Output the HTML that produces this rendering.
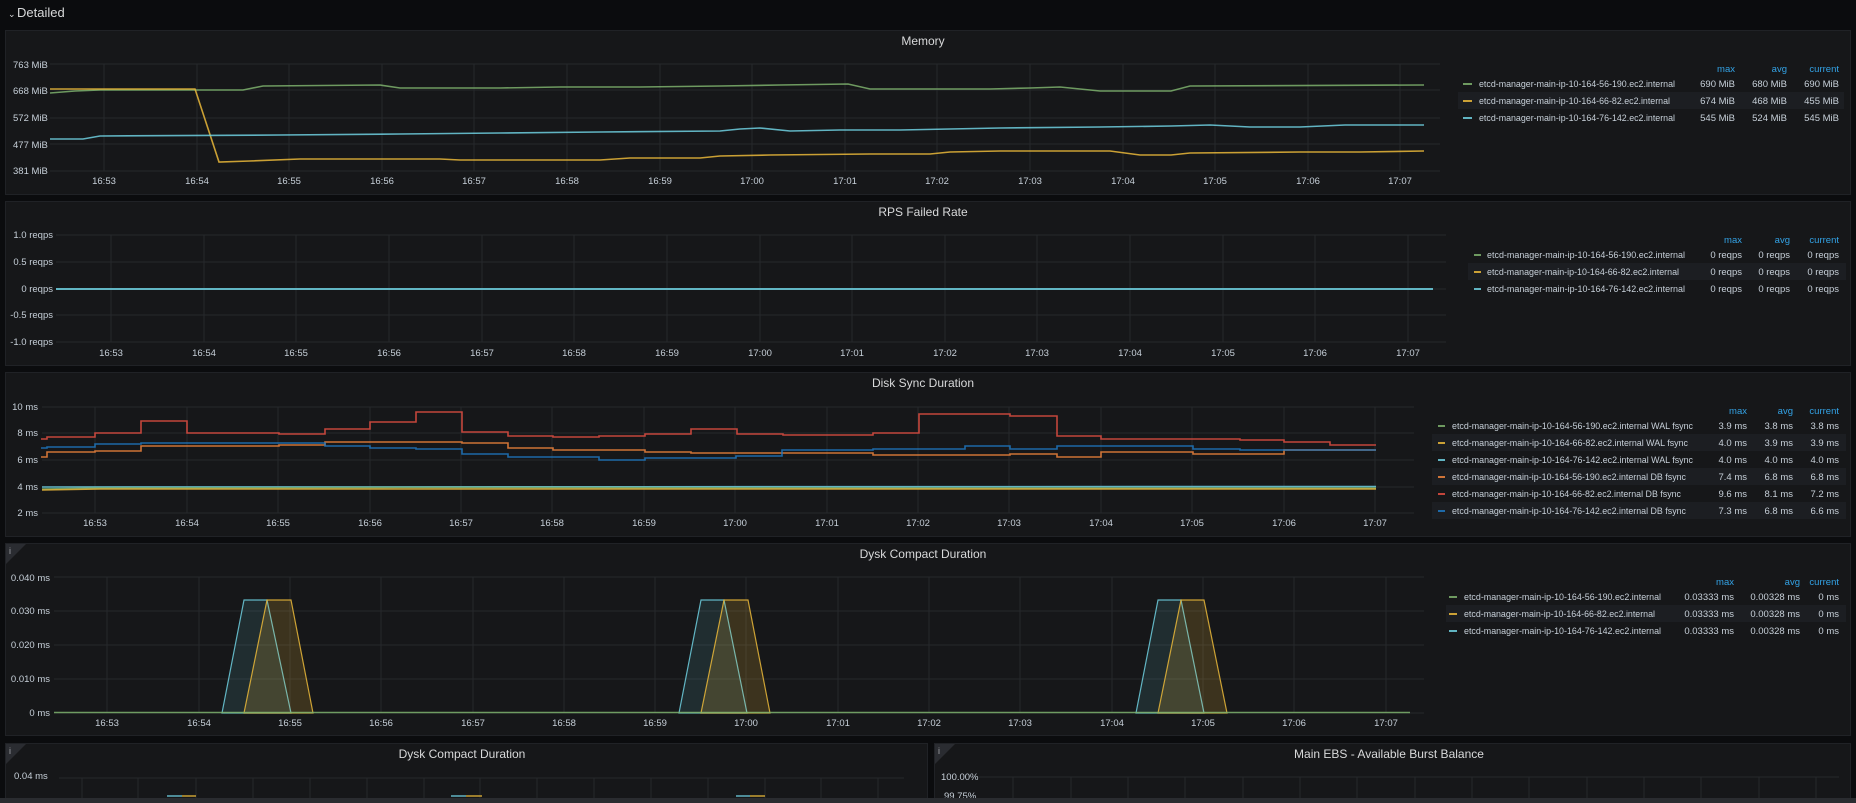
<!DOCTYPE html>
<html><head><meta charset="utf-8"><style>
html,body{margin:0;padding:0;background:#0b0c0e;width:1856px;height:803px;overflow:hidden}
svg{display:block}
text{font-family:"Liberation Sans",sans-serif}
.t{fill:#d8d9da;font-size:12px;text-anchor:middle}
.ax{fill:#c7d0d9;font-size:9.5px}
.r{text-anchor:end}
.m{text-anchor:middle}
.lg{fill:#c7d0d9;font-size:9.5px}
.hd{fill:#33a2e5;font-size:9.5px;text-anchor:end}
.g{stroke:#26282c;stroke-width:1}
.s{stroke-opacity:0.85}
</style></head><body>
<svg width="1856" height="803" viewBox="0 0 1856 803" xmlns="http://www.w3.org/2000/svg">
<rect width="1856" height="803" fill="#0b0c0e"/>
<text x="8" y="17" fill="#d8d9da" font-size="9">⌄</text>
<text x="17" y="17" fill="#d8d9da" font-size="13">Detailed</text>

<!-- panels -->
<g fill="#161719" stroke="#202226">
<rect x="5.5" y="30.5" width="1845" height="164"/>
<rect x="5.5" y="201.5" width="1845" height="164"/>
<rect x="5.5" y="372.5" width="1845" height="164"/>
<rect x="5.5" y="543.5" width="1845" height="192"/>
<rect x="5.5" y="743.5" width="922" height="70"/>
<rect x="934.5" y="743.5" width="916" height="70"/>
</g>

<!-- MEMORY -->
<text class="t" x="923" y="45">Memory</text>
<g class="g">
<line x1="50" y1="64" x2="1440" y2="64"/><line x1="50" y1="90" x2="1440" y2="90"/><line x1="50" y1="118" x2="1440" y2="118"/><line x1="50" y1="144" x2="1440" y2="144"/><line x1="50" y1="171" x2="1440" y2="171"/>
<line x1="104" y1="64" x2="104" y2="171"/><line x1="197" y1="64" x2="197" y2="171"/><line x1="289" y1="64" x2="289" y2="171"/><line x1="382" y1="64" x2="382" y2="171"/><line x1="474" y1="64" x2="474" y2="171"/><line x1="567" y1="64" x2="567" y2="171"/><line x1="660" y1="64" x2="660" y2="171"/><line x1="752" y1="64" x2="752" y2="171"/><line x1="845" y1="64" x2="845" y2="171"/><line x1="937" y1="64" x2="937" y2="171"/><line x1="1030" y1="64" x2="1030" y2="171"/><line x1="1123" y1="64" x2="1123" y2="171"/><line x1="1215" y1="64" x2="1215" y2="171"/><line x1="1308" y1="64" x2="1308" y2="171"/><line x1="1400" y1="64" x2="1400" y2="171"/>
</g>
<g class="ax">
<text x="13" y="68">763 MiB</text><text x="13" y="94">668 MiB</text><text x="13" y="121">572 MiB</text><text x="13" y="148">477 MiB</text><text x="13" y="174">381 MiB</text>
</g>
<g class="ax m">
<text x="104" y="184">16:53</text><text x="197" y="184">16:54</text><text x="289" y="184">16:55</text><text x="382" y="184">16:56</text><text x="474" y="184">16:57</text><text x="567" y="184">16:58</text><text x="660" y="184">16:59</text><text x="752" y="184">17:00</text><text x="845" y="184">17:01</text><text x="937" y="184">17:02</text><text x="1030" y="184">17:03</text><text x="1123" y="184">17:04</text><text x="1215" y="184">17:05</text><text x="1308" y="184">17:06</text><text x="1400" y="184">17:07</text>
</g>
<g fill="none" stroke-width="1.6" class="s">
<polyline stroke="#7eb26d" points="50,93 75,91 100,90 190,90 243,90 263,86 380,85 400,88 500,88 560,87 640,87 720,86 780,85 848,84 870,89 990,89 1030,88 1060,87 1100,91 1171,91 1190,86 1424,85"/>
<polyline stroke="#eab839" points="50,89 195,89 219,162 250,161 300,159 440,159 460,160 600,160 630,158 700,158 720,156 770,155 870,154 930,154 950,152 1000,151 1110,151 1140,155 1171,155 1190,153 1300,152 1360,152 1424,151"/>
<polyline stroke="#6ed0e0" points="50,139 83,139 100,136 280,135 400,134 500,133 600,132 720,131 740,129 760,128 790,131 840,130 900,130 950,129 1000,128 1100,127 1171,126 1210,125 1250,127 1300,127 1345,125 1424,125"/>
</g>
<rect x="1458" y="92" width="386" height="17" fill="#1c1e22"/>
<text class="hd" x="1735" y="72">max</text><text class="hd" x="1787" y="72">avg</text><text class="hd" x="1839" y="72">current</text>
<g stroke-width="2" class="s"><line x1="1463" y1="84" x2="1472" y2="84" stroke="#7eb26d"/><line x1="1463" y1="101" x2="1472" y2="101" stroke="#eab839"/><line x1="1463" y1="118" x2="1472" y2="118" stroke="#6ed0e0"/></g>
<g class="lg">
<text x="1479" y="87" textLength="196" lengthAdjust="spacingAndGlyphs">etcd-manager-main-ip-10-164-56-190.ec2.internal</text>
<text x="1479" y="104" textLength="191" lengthAdjust="spacingAndGlyphs">etcd-manager-main-ip-10-164-66-82.ec2.internal</text>
<text x="1479" y="121" textLength="196" lengthAdjust="spacingAndGlyphs">etcd-manager-main-ip-10-164-76-142.ec2.internal</text>
</g>
<g class="lg r">
<text x="1735" y="87">690 MiB</text><text x="1787" y="87">680 MiB</text><text x="1839" y="87">690 MiB</text>
<text x="1735" y="104">674 MiB</text><text x="1787" y="104">468 MiB</text><text x="1839" y="104">455 MiB</text>
<text x="1735" y="121">545 MiB</text><text x="1787" y="121">524 MiB</text><text x="1839" y="121">545 MiB</text>
</g>

<!-- RPS -->
<text class="t" x="923" y="216">RPS Failed Rate</text>
<g class="g">
<line x1="56" y1="235" x2="1446" y2="235"/><line x1="56" y1="262" x2="1446" y2="262"/><line x1="56" y1="289" x2="1446" y2="289"/><line x1="56" y1="315" x2="1446" y2="315"/><line x1="56" y1="342" x2="1446" y2="342"/>
<line x1="111" y1="235" x2="111" y2="342"/><line x1="204" y1="235" x2="204" y2="342"/><line x1="296" y1="235" x2="296" y2="342"/><line x1="389" y1="235" x2="389" y2="342"/><line x1="482" y1="235" x2="482" y2="342"/><line x1="574" y1="235" x2="574" y2="342"/><line x1="667" y1="235" x2="667" y2="342"/><line x1="760" y1="235" x2="760" y2="342"/><line x1="852" y1="235" x2="852" y2="342"/><line x1="945" y1="235" x2="945" y2="342"/><line x1="1037" y1="235" x2="1037" y2="342"/><line x1="1130" y1="235" x2="1130" y2="342"/><line x1="1223" y1="235" x2="1223" y2="342"/><line x1="1315" y1="235" x2="1315" y2="342"/><line x1="1408" y1="235" x2="1408" y2="342"/>
</g>
<g class="ax r">
<text x="53" y="238">1.0 reqps</text><text x="53" y="265">0.5 reqps</text><text x="53" y="292">0 reqps</text><text x="53" y="318">-0.5 reqps</text><text x="53" y="345">-1.0 reqps</text>
</g>
<g class="ax m">
<text x="111" y="356">16:53</text><text x="204" y="356">16:54</text><text x="296" y="356">16:55</text><text x="389" y="356">16:56</text><text x="482" y="356">16:57</text><text x="574" y="356">16:58</text><text x="667" y="356">16:59</text><text x="760" y="356">17:00</text><text x="852" y="356">17:01</text><text x="945" y="356">17:02</text><text x="1037" y="356">17:03</text><text x="1130" y="356">17:04</text><text x="1223" y="356">17:05</text><text x="1315" y="356">17:06</text><text x="1408" y="356">17:07</text>
</g>
<line x1="56" y1="289" x2="1433" y2="289" stroke="#6ed0e0" stroke-width="2" class="s"/>
<rect x="1468" y="263" width="378" height="17" fill="#1c1e22"/>
<text class="hd" x="1742" y="243">max</text><text class="hd" x="1790" y="243">avg</text><text class="hd" x="1839" y="243">current</text>
<g stroke-width="2" class="s"><line x1="1474" y1="255" x2="1481" y2="255" stroke="#7eb26d"/><line x1="1474" y1="272" x2="1481" y2="272" stroke="#eab839"/><line x1="1474" y1="289" x2="1481" y2="289" stroke="#6ed0e0"/></g>
<g class="lg">
<text x="1487" y="258" textLength="198" lengthAdjust="spacingAndGlyphs">etcd-manager-main-ip-10-164-56-190.ec2.internal</text>
<text x="1487" y="275" textLength="192" lengthAdjust="spacingAndGlyphs">etcd-manager-main-ip-10-164-66-82.ec2.internal</text>
<text x="1487" y="292" textLength="198" lengthAdjust="spacingAndGlyphs">etcd-manager-main-ip-10-164-76-142.ec2.internal</text>
</g>
<g class="lg r">
<text x="1742" y="258">0 reqps</text><text x="1790" y="258">0 reqps</text><text x="1839" y="258">0 reqps</text>
<text x="1742" y="275">0 reqps</text><text x="1790" y="275">0 reqps</text><text x="1839" y="275">0 reqps</text>
<text x="1742" y="292">0 reqps</text><text x="1790" y="292">0 reqps</text><text x="1839" y="292">0 reqps</text>
</g>

<!-- DISK SYNC -->
<text class="t" x="923" y="387">Disk Sync Duration</text>
<g class="g">
<line x1="42" y1="407" x2="1414" y2="407"/><line x1="42" y1="433" x2="1414" y2="433"/><line x1="42" y1="460" x2="1414" y2="460"/><line x1="42" y1="487" x2="1414" y2="487"/><line x1="42" y1="513" x2="1414" y2="513"/>
<line x1="95" y1="407" x2="95" y2="513"/><line x1="187" y1="407" x2="187" y2="513"/><line x1="278" y1="407" x2="278" y2="513"/><line x1="370" y1="407" x2="370" y2="513"/><line x1="461" y1="407" x2="461" y2="513"/><line x1="552" y1="407" x2="552" y2="513"/><line x1="644" y1="407" x2="644" y2="513"/><line x1="735" y1="407" x2="735" y2="513"/><line x1="827" y1="407" x2="827" y2="513"/><line x1="918" y1="407" x2="918" y2="513"/><line x1="1009" y1="407" x2="1009" y2="513"/><line x1="1101" y1="407" x2="1101" y2="513"/><line x1="1192" y1="407" x2="1192" y2="513"/><line x1="1284" y1="407" x2="1284" y2="513"/><line x1="1375" y1="407" x2="1375" y2="513"/>
</g>
<g class="ax r">
<text x="38" y="410">10 ms</text><text x="38" y="436">8 ms</text><text x="38" y="463">6 ms</text><text x="38" y="490">4 ms</text><text x="38" y="516">2 ms</text>
</g>
<g class="ax m">
<text x="95" y="526">16:53</text><text x="187" y="526">16:54</text><text x="278" y="526">16:55</text><text x="370" y="526">16:56</text><text x="461" y="526">16:57</text><text x="552" y="526">16:58</text><text x="644" y="526">16:59</text><text x="735" y="526">17:00</text><text x="827" y="526">17:01</text><text x="918" y="526">17:02</text><text x="1009" y="526">17:03</text><text x="1101" y="526">17:04</text><text x="1192" y="526">17:05</text><text x="1284" y="526">17:06</text><text x="1375" y="526">17:07</text>
</g>
<g fill="none" stroke-width="1.6" class="s">
<line x1="42" y1="487" x2="1376" y2="486.5" stroke="#6ed0e0"/>
<polyline stroke="#7eb26d" points="42,489 100,488 400,487.5 900,488 1376,488"/>
<polyline stroke="#eab839" points="42,490 100,489 400,489 900,489 1376,489"/>
<path stroke="#ef843c" d="M41,457 L47,457 L47,452 L95,452 L95,451 L141,451 L141,446 L279,446 L279,445 L325,445 L325,442 L462,442 L462,443 L508,443 L508,448 L553,448 L553,450 L645,450 L645,452 L691,452 L691,453 L873,453 L873,455 L1010,455 L1010,454 L1057,454 L1057,457 L1101,457 L1101,452 L1193,452 L1193,454 L1284,454 L1284,450 L1376,450"/>
<path stroke="#1f78c1" d="M41,448 L47,448 L47,447 L95,447 L95,444 L141,444 L141,443 L325,443 L325,446 L370,446 L370,448 L416,448 L416,449 L462,449 L462,454 L508,454 L508,457 L599,457 L599,460 L645,460 L645,458 L736,458 L736,456 L782,456 L782,450 L873,450 L873,449 L965,449 L965,446 L1010,446 L1010,449 L1057,449 L1057,446 L1193,446 L1193,449 L1240,449 L1240,450 L1376,450"/>
<path stroke="#e24d42" d="M41,439 L47,439 L47,437 L95,437 L95,433 L141,433 L141,421 L187,421 L187,433 L279,433 L279,434 L325,434 L325,429 L370,429 L370,422 L416,422 L416,412 L462,412 L462,432 L508,432 L508,436 L553,436 L553,437 L599,437 L599,436 L645,436 L645,434 L691,434 L691,429 L737,429 L737,434 L783,434 L783,435 L873,435 L873,433 L919,433 L919,414 L1010,414 L1010,416 L1057,416 L1057,436 L1101,436 L1101,439 L1240,439 L1240,440 L1284,440 L1284,442 L1330,442 L1330,445 L1376,445"/>
</g>
<g fill="#1c1e22"><rect x="1432" y="434" width="414" height="17"/><rect x="1432" y="468" width="414" height="17"/><rect x="1432" y="502" width="414" height="17"/></g>
<text class="hd" x="1747" y="414">max</text><text class="hd" x="1793" y="414">avg</text><text class="hd" x="1839" y="414">current</text>
<g stroke-width="2" class="s">
<line x1="1438" y1="426" x2="1445" y2="426" stroke="#7eb26d"/><line x1="1438" y1="443" x2="1445" y2="443" stroke="#eab839"/><line x1="1438" y1="460" x2="1445" y2="460" stroke="#6ed0e0"/><line x1="1438" y1="477" x2="1445" y2="477" stroke="#ef843c"/><line x1="1438" y1="494" x2="1445" y2="494" stroke="#e24d42"/><line x1="1438" y1="511" x2="1445" y2="511" stroke="#1f78c1"/>
</g>
<g class="lg">
<text x="1452" y="429" textLength="241" lengthAdjust="spacingAndGlyphs">etcd-manager-main-ip-10-164-56-190.ec2.internal WAL fsync</text>
<text x="1452" y="446" textLength="236" lengthAdjust="spacingAndGlyphs">etcd-manager-main-ip-10-164-66-82.ec2.internal WAL fsync</text>
<text x="1452" y="463" textLength="241" lengthAdjust="spacingAndGlyphs">etcd-manager-main-ip-10-164-76-142.ec2.internal WAL fsync</text>
<text x="1452" y="480" textLength="234" lengthAdjust="spacingAndGlyphs">etcd-manager-main-ip-10-164-56-190.ec2.internal DB fsync</text>
<text x="1452" y="497" textLength="229" lengthAdjust="spacingAndGlyphs">etcd-manager-main-ip-10-164-66-82.ec2.internal DB fsync</text>
<text x="1452" y="514" textLength="234" lengthAdjust="spacingAndGlyphs">etcd-manager-main-ip-10-164-76-142.ec2.internal DB fsync</text>
</g>
<g class="lg r">
<text x="1747" y="429">3.9 ms</text><text x="1793" y="429">3.8 ms</text><text x="1839" y="429">3.8 ms</text>
<text x="1747" y="446">4.0 ms</text><text x="1793" y="446">3.9 ms</text><text x="1839" y="446">3.9 ms</text>
<text x="1747" y="463">4.0 ms</text><text x="1793" y="463">4.0 ms</text><text x="1839" y="463">4.0 ms</text>
<text x="1747" y="480">7.4 ms</text><text x="1793" y="480">6.8 ms</text><text x="1839" y="480">6.8 ms</text>
<text x="1747" y="497">9.6 ms</text><text x="1793" y="497">8.1 ms</text><text x="1839" y="497">7.2 ms</text>
<text x="1747" y="514">7.3 ms</text><text x="1793" y="514">6.8 ms</text><text x="1839" y="514">6.6 ms</text>
</g>

<!-- DYSK COMPACT -->
<polygon points="6,544 26,544 6,564" fill="#2a2c31"/><text x="9" y="554" fill="#9fa1a6" font-size="9">i</text>
<text class="t" x="923" y="558">Dysk Compact Duration</text>
<g class="g">
<line x1="54" y1="577" x2="1424" y2="577"/><line x1="54" y1="611" x2="1424" y2="611"/><line x1="54" y1="645" x2="1424" y2="645"/><line x1="54" y1="679" x2="1424" y2="679"/><line x1="54" y1="713" x2="1424" y2="713"/>
<line x1="107" y1="577" x2="107" y2="713"/><line x1="199" y1="577" x2="199" y2="713"/><line x1="290" y1="577" x2="290" y2="713"/><line x1="381" y1="577" x2="381" y2="713"/><line x1="473" y1="577" x2="473" y2="713"/><line x1="564" y1="577" x2="564" y2="713"/><line x1="655" y1="577" x2="655" y2="713"/><line x1="746" y1="577" x2="746" y2="713"/><line x1="838" y1="577" x2="838" y2="713"/><line x1="929" y1="577" x2="929" y2="713"/><line x1="1020" y1="577" x2="1020" y2="713"/><line x1="1112" y1="577" x2="1112" y2="713"/><line x1="1203" y1="577" x2="1203" y2="713"/><line x1="1294" y1="577" x2="1294" y2="713"/><line x1="1386" y1="577" x2="1386" y2="713"/>
</g>
<g class="ax r">
<text x="50" y="581">0.040 ms</text><text x="50" y="614">0.030 ms</text><text x="50" y="648">0.020 ms</text><text x="50" y="682">0.010 ms</text><text x="50" y="716">0 ms</text>
</g>
<g class="ax m">
<text x="107" y="726">16:53</text><text x="199" y="726">16:54</text><text x="290" y="726">16:55</text><text x="381" y="726">16:56</text><text x="473" y="726">16:57</text><text x="564" y="726">16:58</text><text x="655" y="726">16:59</text><text x="746" y="726">17:00</text><text x="838" y="726">17:01</text><text x="929" y="726">17:02</text><text x="1020" y="726">17:03</text><text x="1112" y="726">17:04</text><text x="1203" y="726">17:05</text><text x="1294" y="726">17:06</text><text x="1386" y="726">17:07</text>
</g>
<g stroke-width="1.2" class="s">
<polygon points="222,713 244,600 267,600 291,713" fill="#6ed0e0" fill-opacity="0.12" stroke="#6ed0e0"/>
<polygon points="679,713 701,600 724,600 747,713" fill="#6ed0e0" fill-opacity="0.12" stroke="#6ed0e0"/>
<polygon points="1136,713 1158,600 1181,600 1204,713" fill="#6ed0e0" fill-opacity="0.12" stroke="#6ed0e0"/>
<polygon points="244,713 267,600 291,600 313,713" fill="#eab839" fill-opacity="0.18" stroke="#eab839"/>
<polygon points="701,713 724,600 748,600 770,713" fill="#eab839" fill-opacity="0.18" stroke="#eab839"/>
<polygon points="1158,713 1181,600 1204,600 1227,713" fill="#eab839" fill-opacity="0.18" stroke="#eab839"/>
<line x1="54" y1="712.5" x2="1410" y2="712.5" stroke="#7eb26d" stroke-width="1.6"/>
</g>
<rect x="1446" y="605" width="400" height="17" fill="#1c1e22"/>
<text class="hd" x="1734" y="585">max</text><text class="hd" x="1800" y="585">avg</text><text class="hd" x="1839" y="585">current</text>
<g stroke-width="2" class="s"><line x1="1449" y1="597" x2="1457" y2="597" stroke="#7eb26d"/><line x1="1449" y1="614" x2="1457" y2="614" stroke="#eab839"/><line x1="1449" y1="631" x2="1457" y2="631" stroke="#6ed0e0"/></g>
<g class="lg">
<text x="1464" y="600" textLength="197" lengthAdjust="spacingAndGlyphs">etcd-manager-main-ip-10-164-56-190.ec2.internal</text>
<text x="1464" y="617" textLength="191" lengthAdjust="spacingAndGlyphs">etcd-manager-main-ip-10-164-66-82.ec2.internal</text>
<text x="1464" y="634" textLength="197" lengthAdjust="spacingAndGlyphs">etcd-manager-main-ip-10-164-76-142.ec2.internal</text>
</g>
<g class="lg r">
<text x="1734" y="600">0.03333 ms</text><text x="1800" y="600">0.00328 ms</text><text x="1839" y="600">0 ms</text>
<text x="1734" y="617">0.03333 ms</text><text x="1800" y="617">0.00328 ms</text><text x="1839" y="617">0 ms</text>
<text x="1734" y="634">0.03333 ms</text><text x="1800" y="634">0.00328 ms</text><text x="1839" y="634">0 ms</text>
</g>

<!-- BOTTOM LEFT -->
<polygon points="6,744 26,744 6,764" fill="#2a2c31"/><text x="9" y="754" fill="#9fa1a6" font-size="9">i</text>
<text class="t" x="462" y="758">Dysk Compact Duration</text>
<line class="g" x1="59" y1="778" x2="904" y2="778"/>
<g class="g">
<line x1="82" y1="778" x2="82" y2="798"/><line x1="138" y1="778" x2="138" y2="798"/><line x1="196" y1="778" x2="196" y2="798"/><line x1="253" y1="778" x2="253" y2="798"/><line x1="310" y1="778" x2="310" y2="798"/><line x1="367" y1="778" x2="367" y2="798"/><line x1="424" y1="778" x2="424" y2="798"/><line x1="480" y1="778" x2="480" y2="798"/><line x1="537" y1="778" x2="537" y2="798"/><line x1="594" y1="778" x2="594" y2="798"/><line x1="651" y1="778" x2="651" y2="798"/><line x1="708" y1="778" x2="708" y2="798"/><line x1="765" y1="778" x2="765" y2="798"/><line x1="821" y1="778" x2="821" y2="798"/><line x1="878" y1="778" x2="878" y2="798"/>
</g>
<text class="ax" x="14" y="779">0.04 ms</text>
<g stroke-width="1.5" class="s">
<line x1="167" y1="796" x2="182" y2="796" stroke="#6ed0e0"/><line x1="182" y1="796" x2="196" y2="796" stroke="#eab839"/>
<line x1="451" y1="796" x2="466" y2="796" stroke="#6ed0e0"/><line x1="466" y1="796" x2="482" y2="796" stroke="#eab839"/>
<line x1="736" y1="796" x2="750" y2="796" stroke="#6ed0e0"/><line x1="750" y1="796" x2="765" y2="796" stroke="#eab839"/>
</g>

<!-- BOTTOM RIGHT -->
<polygon points="935,744 955,744 935,764" fill="#2a2c31"/><text x="938" y="754" fill="#9fa1a6" font-size="9">i</text>
<text class="t" x="1389" y="758">Main EBS - Available Burst Balance</text>
<line class="g" x1="979" y1="777" x2="1839" y2="777"/>
<g class="g">
<line x1="1013" y1="777" x2="1013" y2="798"/><line x1="1071" y1="777" x2="1071" y2="798"/><line x1="1128" y1="777" x2="1128" y2="798"/><line x1="1185" y1="777" x2="1185" y2="798"/><line x1="1243" y1="777" x2="1243" y2="798"/><line x1="1300" y1="777" x2="1300" y2="798"/><line x1="1357" y1="777" x2="1357" y2="798"/><line x1="1415" y1="777" x2="1415" y2="798"/><line x1="1472" y1="777" x2="1472" y2="798"/><line x1="1529" y1="777" x2="1529" y2="798"/><line x1="1587" y1="777" x2="1587" y2="798"/><line x1="1644" y1="777" x2="1644" y2="798"/><line x1="1701" y1="777" x2="1701" y2="798"/><line x1="1759" y1="777" x2="1759" y2="798"/><line x1="1816" y1="777" x2="1816" y2="798"/>
</g>
<text class="ax" x="941" y="780">100.00%</text>
<text class="ax" x="944" y="799">99.75%</text>

<rect x="0" y="798" width="1856" height="5" fill="#2a2c30"/>
</svg>
</body></html>
